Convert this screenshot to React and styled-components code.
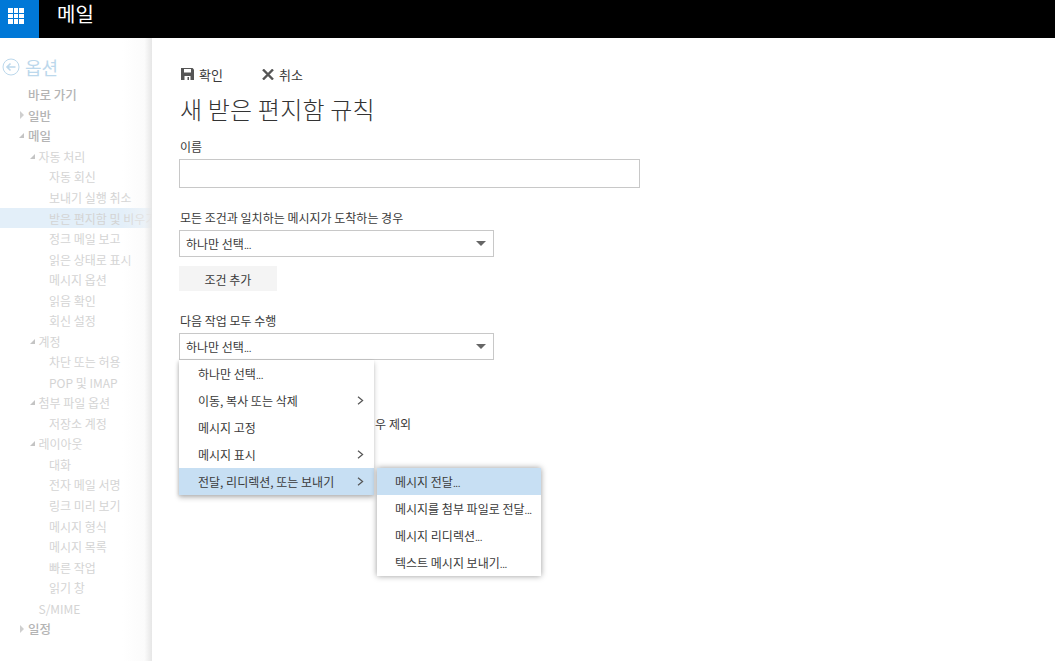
// App.jsx
import React from 'react';
import styled, { createGlobalStyle } from 'styled-components';

const GlobalStyle = createGlobalStyle`
  html, body {
    margin: 0;
    padding: 0;
    height: 100%;
    overflow: hidden;
    background: #fff;
  }

  body {
    font-family: "Noto Sans CJK KR", "Noto Sans", sans-serif;
    font-size: 12px;
    color: #3a3a3a;
  }
`;

const Page = styled.div`
  width: 1055px;
  height: 661px;
  display: flex;
  flex-direction: column;
  overflow: hidden;
`;

const TopBar = styled.header`
  height: 38px;
  flex: none;
  display: flex;
  background: #000;
`;

const AppTile = styled.div`
  width: 39px;
  box-sizing: border-box;
  padding: 8px 0 0 8px;
  background: #0078d7;
`;

const Waffle = styled.div`
  display: grid;
  grid-template-columns: repeat(3, 4.67px);
  grid-auto-rows: 4.67px;
  gap: 1px;

  i {
    background: #fff;
  }
`;

const AppName = styled.div`
  margin-left: 18px;
  height: 28px;
  line-height: 28px;
  font-size: 20px;
  color: #fff;
`;

const Body = styled.div`
  flex: 1;
  display: flex;
  min-height: 0;
`;

const Sidebar = styled.nav`
  position: relative;
  width: 152px;
  flex: none;
  box-sizing: border-box;
  padding-top: 14px;
  overflow: hidden;
  background: #fff;

  &::after {
    content: '';
    position: absolute;
    top: 0;
    right: 0;
    bottom: 0;
    width: 30px;
    background: linear-gradient(90deg, rgba(246, 246, 246, 0) 0, rgba(246, 246, 246, 0.45) 75%, #e6e6e6 100%);
  }
`;

const OptionsHeader = styled.div`
  height: 32.6px;
  padding: 0 0 2.6px 2px;
  box-sizing: border-box;
  display: flex;
  align-items: center;
  gap: 5px;
  font-size: 18px;
  color: #bcd8ec;
`;

const TreeRow = styled.div`
  height: 20.54px;
  display: flex;
  align-items: center;
  white-space: nowrap;
  font-size: ${(p) => (p.$level === 0 ? '12.5px' : '12px')};
  font-weight: ${(p) => (p.$level === 0 ? 500 : 400)};
  color: ${(p) => (p.$level === 0 ? '#b4b4b4' : '#d4d4d4')};
  background: ${(p) => (p.$active ? '#e3eff9' : 'transparent')};
`;

const Indent = styled.span`
  width: ${(p) => 28 + p.$level * 10.5}px;
  flex: none;
  display: flex;
  justify-content: flex-end;
  padding-right: 4px;
  box-sizing: border-box;
`;

const Caret = styled.i`
  width: 0;
  height: 0;
  ${(p) =>
    p.$open
      ? `border-style: solid;
         border-width: 0 0 5px 5px;
         border-color: transparent transparent #c4c4c4 transparent;`
      : `border-style: solid;
         border-width: 4px 0 4px 4px;
         border-color: transparent transparent transparent #cfcfcf;`}
`;

const Main = styled.main`
  flex: 1;
  padding: 25px 0 0 27px;
  min-width: 0;
`;

const Toolbar = styled.div`
  height: 22px;
  display: flex;
  align-items: center;
  gap: 39px;
  padding-left: 2px;
`;

const ToolButton = styled.div`
  display: flex;
  align-items: center;
  gap: 5px;
  font-size: 13px;
`;

const Title = styled.h1`
  margin: 6px 0 0 1px;
  height: 36px;
  line-height: 36px;
  font-size: 24px;
  font-weight: 300;
  letter-spacing: 0.2px;
  color: #333;
`;

const Label = styled.div`
  height: 16px;
  line-height: 16px;
  margin: ${(p) => p.$top}px 0 4px 1px;
  font-size: 12px;
`;

const TextInput = styled.input`
  display: block;
  width: 461px;
  height: 29px;
  box-sizing: border-box;
  border: 1px solid #c8c8c8;
  background: #fff;
  padding: 0 6px;
`;

const SelectWrap = styled.div`
  position: relative;
  width: 315px;
`;

const Select = styled.div`
  height: 27px;
  box-sizing: border-box;
  display: flex;
  align-items: center;
  justify-content: space-between;
  padding: 0 6px;
  border: 1px solid #c8c8c8;
  background: #fff;
  font-size: 12px;
`;

const SelectArrow = styled.i`
  width: 0;
  height: 0;
  margin-right: 1px;
  border-style: solid;
  border-width: 5px 5px 0 5px;
  border-color: #666 transparent transparent transparent;
`;

const AddButton = styled.div`
  width: 98px;
  height: 25px;
  margin-top: 9px;
  line-height: 27px;
  text-align: center;
  font-size: 12px;
  background: #f4f4f4;
`;

const ExceptText = styled.div`
  margin: 56px 0 0 1px;
  height: 16px;
  line-height: 16px;
  font-size: 12px;
  letter-spacing: 0.1px;
`;

const Menu = styled.ul`
  position: absolute;
  top: ${(p) => p.$top}px;
  left: ${(p) => p.$left}px;
  width: ${(p) => p.$width}px;
  margin: 0;
  padding: 0;
  list-style: none;
  background: #fff;
  box-shadow: ${(p) => p.$shadow};
  z-index: 10;
`;

const MenuItem = styled.li`
  position: relative;
  height: 27px;
  display: flex;
  align-items: center;
  justify-content: space-between;
  padding: 0 10px 0 ${(p) => p.$pad}px;
  font-size: 12px;
  white-space: nowrap;
  background: ${(p) => (p.$active ? '#c7dff3' : 'transparent')};
`;

const Dots = styled.span`
  font-size: 10px;
  letter-spacing: -0.4px;
`;

const Chevron = styled.svg`
  width: 7px;
  height: 9px;
  fill: none;
  stroke: #555;
  stroke-width: 1.2;
`;

const sidebarRows = [
  { text: '바로 가기', level: 0 },
  { text: '일반', level: 0, caret: 'closed' },
  { text: '메일', level: 0, caret: 'open' },
  { text: '자동 처리', level: 1, caret: 'open' },
  { text: '자동 회신', level: 2 },
  { text: '보내기 실행 취소', level: 2 },
  { text: '받은 편지함 및 비우기', level: 2, active: true },
  { text: '정크 메일 보고', level: 2 },
  { text: '읽은 상태로 표시', level: 2 },
  { text: '메시지 옵션', level: 2 },
  { text: '읽음 확인', level: 2 },
  { text: '회신 설정', level: 2 },
  { text: '계정', level: 1, caret: 'open' },
  { text: '차단 또는 허용', level: 2 },
  { text: 'POP 및 IMAP', level: 2 },
  { text: '첨부 파일 옵션', level: 1, caret: 'open' },
  { text: '저장소 계정', level: 2 },
  { text: '레이아웃', level: 1, caret: 'open' },
  { text: '대화', level: 2 },
  { text: '전자 메일 서명', level: 2 },
  { text: '링크 미리 보기', level: 2 },
  { text: '메시지 형식', level: 2 },
  { text: '메시지 목록', level: 2 },
  { text: '빠른 작업', level: 2 },
  { text: '읽기 창', level: 2 },
  { text: 'S/MIME', level: 1 },
  { text: '일정', level: 0, caret: 'closed' },
];

const actionItems = [
  { text: '하나만 선택', dots: true },
  { text: '이동, 복사 또는 삭제', more: true },
  { text: '메시지 고정' },
  { text: '메시지 표시', more: true },
];

const forwardItems = ['메시지 전달', '메시지를 첨부 파일로 전달', '메시지 리디렉션', '텍스트 메시지 보내기'];

function MoreChevron() {
  return (
    <Chevron viewBox="0 0 7 9">
      <path d="M1 .8 5.6 4.5 1 8.2" />
    </Chevron>
  );
}

function BackIcon() {
  return (
    <svg width="18" height="18" viewBox="0 0 18 18" fill="none" stroke="#bcd8ec">
      <circle cx="9" cy="9" r="8" strokeWidth="1" />
      <path d="M13.5 9H5M8.5 5.5 5 9l3.5 3.5" strokeWidth="1.6" />
    </svg>
  );
}

function SaveIcon() {
  return (
    <svg width="13" height="12" viewBox="0 0 13 12">
      <path fill="#555" d="M0 0h11.5L13 1.5V12H0z" />
      <path fill="#fff" d="M3 1h7v3.5H3zM3.5 8h6v4h-6z" />
      <path fill="#555" d="M6.5 9h1.5v3H6.500z" />
    </svg>
  );
}

function CloseIcon() {
  return (
    <svg width="12" height="11" viewBox="0 0 12 11" fill="none" stroke="#555" strokeWidth="2.4">
      <path d="M1 .5 11 10.500M11 .5 1 10.500" />
    </svg>
  );
}

function App() {
  return (
    <Page>
      <GlobalStyle />
      <TopBar>
        <AppTile>
          <Waffle>
            {Array.from({ length: 9 }).map((_, i) => (
              <i key={i} />
            ))}
          </Waffle>
        </AppTile>
        <AppName>메일</AppName>
      </TopBar>
      <Body>
        <Sidebar>
          <OptionsHeader>
            <BackIcon />
            옵션
          </OptionsHeader>
          {sidebarRows.map((row) => (
            <TreeRow key={row.text} $level={row.level} $active={row.active}>
              <Indent $level={row.level}>{row.caret && <Caret $open={row.caret === 'open'} />}</Indent>
              {row.text}
            </TreeRow>
          ))}
        </Sidebar>
        <Main>
          <Toolbar>
            <ToolButton>
              <SaveIcon />
              확인
            </ToolButton>
            <ToolButton>
              <CloseIcon />
              취소
            </ToolButton>
          </Toolbar>
          <Title>새 받은 편지함 규칙</Title>
          <Label $top={12}>이름</Label>
          <TextInput />
          <Label $top={22}>모든 조건과 일치하는 메시지가 도착하는 경우</Label>
          <SelectWrap>
            <Select>
              <span>
                하나만 선택<Dots>...</Dots>
              </span>
              <SelectArrow />
            </Select>
          </SelectWrap>
          <AddButton>조건 추가</AddButton>
          <Label $top={22}>다음 작업 모두 수행</Label>
          <SelectWrap>
            <Select>
              <span>
                하나만 선택<Dots>...</Dots>
              </span>
              <SelectArrow />
            </Select>
            <Menu $top={27} $left={0} $width={195} $shadow="0 3px 5px rgba(0, 0, 0, 0.22), -1px 1px 3px rgba(0, 0, 0, 0.12)">
              {actionItems.map((item) => (
                <MenuItem key={item.text} $pad={19}>
                  <span>
                    {item.text}
                    {item.dots && <Dots>...</Dots>}
                  </span>
                  {item.more && <MoreChevron />}
                </MenuItem>
              ))}
              <MenuItem $pad={19} $active>
                전달, 리디렉션, 또는 보내기
                <MoreChevron />
                <Menu $top={0} $left={198} $width={164} $shadow="0 0 6px rgba(0, 0, 0, 0.4)">
                  {forwardItems.map((text, i) => (
                    <MenuItem key={text} $pad={18} $active={i === 0}>
                      <span>
                        {text}
                        <Dots>...</Dots>
                      </span>
                    </MenuItem>
                  ))}
                </Menu>
              </MenuItem>
            </Menu>
          </SelectWrap>
          <ExceptText>다음 중 하나와 일치하는 메시지 있는 경우 제외</ExceptText>
        </Main>
      </Body>
    </Page>
  );
}

export default App;
